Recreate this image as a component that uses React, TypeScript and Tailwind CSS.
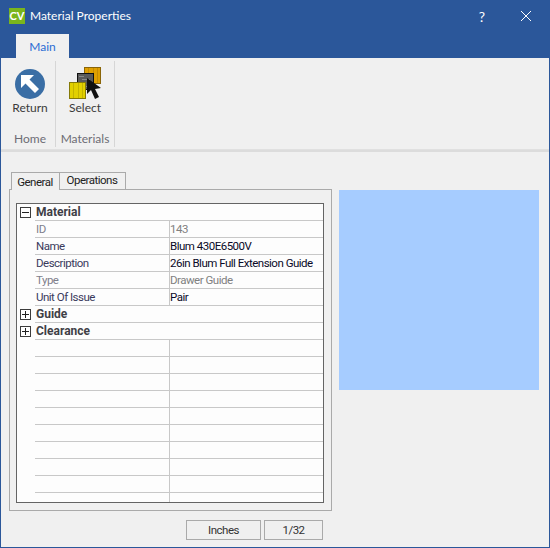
import React from "react";

const font = "font-['Lato','Noto_Sans',sans-serif]";
const small = "font-['Roboto','Noto_Sans',sans-serif] text-[11.5px] tracking-[-0.5px]";

const rows = [
  {name: "ID", value: "143", muted: true},
  {name: "Name", value: "Blum 430E6500V"},
  {name: "Description", value: "26in Blum Full Extension Guide"},
  {name: "Type", value: "Drawer Guide", muted: true},
  {name: "Unit Of Issue", value: "Pair"},
];

const Expander = ({open}: {open: boolean}) => (
  <svg width="11" height="11" viewBox="0 0 11 11" className="block" shapeRendering="crispEdges">
    <rect x="0.5" y="0.5" width="10" height="10" fill="#fff" stroke="#3c3c3c"/>
    <rect x="2" y="5" width="7" height="1" fill="#222"/>
    {!open && <rect x="5" y="2" width="1" height="7" fill="#222"/>}
  </svg>
);

const CategoryRow = ({label, open}: {label: string; open: boolean}) => (
  <div className="flex h-[17px]">
    <div className="w-[18px] shrink-0 flex items-center justify-center pr-[1px]">
      <Expander open={open}/>
    </div>
    <div className="flex-1 border-b border-[#c8c8c8] pl-[1px] font-['Roboto',sans-serif] text-[12px] leading-[16px] font-bold text-[#3f3f46]">
      {label}
    </div>
  </div>
);

const PropRow = ({name, value, muted}: {name?: string; value?: string; muted?: boolean}) => (
  <div className="flex h-[17px]">
    <div className="w-[18px] shrink-0"/>
    <div className={`${small} w-[135px] shrink-0 border-b border-r border-[#c8c8c8] pl-[1px] pt-[1px] leading-[15px] whitespace-nowrap ${muted ? "text-[#7f7f8c]" : "text-[#3a3a5c]"}`}>
      {name}
    </div>
    <div className={`${small} flex-1 border-b border-[#c8c8c8] pt-[1px] leading-[15px] whitespace-nowrap ${muted ? "text-[#808080]" : "text-[#0a0a28]"}`}>
      {value}
    </div>
  </div>
);

const ReturnIcon = () => (
  <svg width="30" height="30" viewBox="0 0 30 30" className="block">
    <circle cx="15" cy="15" r="15" fill="#3a6ea5"/>
    <path d="M6 6 L6 19 L10.5 14.5 L20 24 L24 20 L14.5 10.5 L19 6 Z" fill="#fff"/>
  </svg>
);

const SelectIcon = () => (
  <svg width="33" height="33" viewBox="0 0 33 33" className="block" shapeRendering="crispEdges">
    <rect x="15.5" y="0.5" width="16" height="16" fill="#e0a000" stroke="#8a6508"/>
    <path d="M19 1v15M24 1v15M28 1v15" stroke="#c48a04"/>
    <rect x="8.5" y="6.5" width="16" height="16" fill="#5a5a5a" stroke="#111"/>
    <path d="M10 9h5M13 12h8M10 16h6M17 19h5" stroke="#8a8a8a"/>
    <rect x="0.5" y="15.5" width="16" height="16" fill="#e2d000" stroke="#857a08"/>
    <path d="M4 16v15M9 16v15M13 16v15" stroke="#c4b400"/>
    <path d="M18 11 L18 27 L22 23 L26 32 L30 30 L26 22 L32 21 Z" fill="#111" shapeRendering="auto"/>
  </svg>
);

const RibbonButton = ({icon, label}: {icon: React.ReactNode; label: string}) => (
  <div className="flex flex-col items-center">
    <div className="h-[33px] flex items-center">{icon}</div>
    <span className="text-[12px] leading-[16px] text-[#3b3b3b]">{label}</span>
  </div>
);

const RibbonGroup = ({label, width, children}: {label: string; width: string; children: React.ReactNode}) => (
  <div className={`${width} h-[86px] border-r border-[#d6d6d6] flex flex-col items-center`}>
    <div className="pt-[6px] flex-1">{children}</div>
    <span className="text-[12px] leading-[16px] text-[#6d6d75]">{label}</span>
  </div>
);

export default function App() {
  return (
    <div className={`${font} w-[550px] h-[548px] bg-[#2b579a] flex flex-col overflow-hidden`}>
      <div className="h-[34px] pl-[9px] pb-[2px] flex items-center">
        <div className="w-[16px] h-[16px] bg-[#7ab51d] text-white text-[11px] leading-[16px] font-bold text-center">CV</div>
        <span className="ml-[5px] text-[12px] text-white">Material Properties</span>
        <span className="ml-auto text-[14px] text-white mr-[35px]">?</span>
        <svg width="12" height="12" viewBox="0 0 12 12" className="mr-[18px]">
          <path d="M1 1 L11 11 M11 1 L1 11" stroke="#fff" strokeWidth="1"/>
        </svg>
      </div>

      <div className="h-[24px] pl-[16px] flex items-end">
        <div className="w-[53px] h-[24px] bg-[#f0f0f0] text-center text-[12px] leading-[26px] text-[#2b6cd4]">Main</div>
      </div>

      <div className="mx-[1px] mb-[1px] flex-1 flex flex-col bg-[#f0f0f0]">
        <div className="h-[92px] pt-[3px] pl-[1px] flex border-b border-[#e0e0e0]">
          <RibbonGroup label="Home" width="w-[54px] pl-[3px]">
            <RibbonButton icon={<ReturnIcon/>} label="Return"/>
          </RibbonGroup>
          <RibbonGroup label="Materials" width="w-[59px]">
            <RibbonButton icon={<SelectIcon/>} label="Select"/>
          </RibbonGroup>
        </div>
        <div className="h-[2px] bg-[#dcdcdc]"/>

        <div className="flex pt-[20px] pl-[8px]">
          <div className="w-[323px] shrink-0">
            <div className="flex h-[17px] pl-[2px]">
              <div className={`${small} w-[49px] h-[18px] pr-[1px] bg-[#f0f0f0] border-t border-l border-r border-[#aaaaaa] relative text-center leading-[19px] text-[#222]`}>General</div>
              <div className={`${small} w-[66px] h-[17px] pr-[1px] bg-[#f0f0f0] border-t border-r border-[#aaaaaa] text-center leading-[14px] text-[#222]`}>Operations</div>
            </div>
            <div className="h-[322px] border border-[#aaaaaa] pt-[13px] pl-[6px]">
              <div className="w-[308px] h-[300px] border border-[#646464] bg-[#fdfdfd] overflow-hidden">
                <CategoryRow label="Material" open/>
                {rows.map((r) => <PropRow key={r.name} name={r.name} value={r.value} muted={r.muted}/>)}
                <CategoryRow label="Guide" open={false}/>
                <CategoryRow label="Clearance" open={false}/>
                {Array.from({length: 10}).map((_, i) => <PropRow key={i}/>)}
              </div>
            </div>
          </div>
          <div className="ml-[7px] mt-[18px] w-[200px] h-[200px] bg-[#a6ccff]"/>
        </div>

        <div className="flex justify-start pl-[185px] mt-[9px] gap-[3px]">
          <div className={`${small} w-[75px] h-[20px] border border-[#aaaaaa] text-center leading-[18px] text-[#333]`}>Inches</div>
          <div className={`${small} w-[59px] h-[20px] border border-[#aaaaaa] text-center leading-[18px] text-[#333]`}>1/32</div>
        </div>
      </div>
    </div>
  );
}
